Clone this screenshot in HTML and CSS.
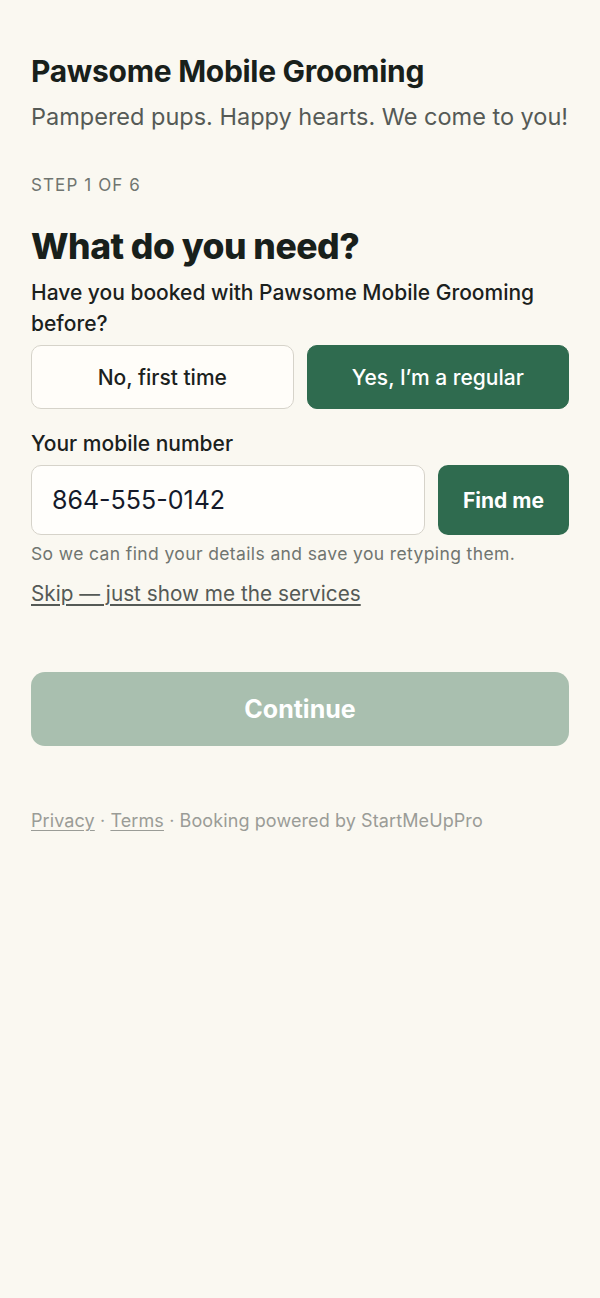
FILE: index.html
```html
<!DOCTYPE html>
<html lang="en">
<head>
    <meta charset="UTF-8">
    <meta name="viewport" content="width=device-width, initial-scale=1.0">
    <title>Pawsome Mobile Grooming - Booking</title>
    <link rel="stylesheet" href="styles.css">
</head>
<body>
    <div class="page">
        <!-- header -->
        <h1 class="brand">Pawsome Mobile Grooming</h1>
        <p class="tagline">Pampered pups. Happy hearts. We come to you!</p>

        <div class="step">Step 1 of 6</div>

        <h2 class="question-title">What do you need?</h2>
        <p class="question">Have you booked with Pawsome Mobile Grooming before?</p>

        <div class="choice-row">
            <button class="choice">No, first time</button>
            <button class="choice selected">Yes, I’m a regular</button>
        </div>

        <!-- phone lookup -->
        <label class="field-label" for="phone">Your mobile number</label>
        <div class="lookup-row">
            <input type="tel" id="phone" class="phone-input" value="864-555-0142">
            <button class="find-button">Find me</button>
        </div>
        <p class="help">So we can find your details and save you retyping them.</p>
        <a href="#" class="skip-link">Skip — just show me the services</a>

        <button class="continue-button" disabled>Continue</button>

        <div class="footer">
            <a href="#">Privacy</a> · <a href="#">Terms</a> · Booking powered by StartMeUpPro
        </div>
    </div>
</body>
</html>
```

FILE: styles.css
```css
body {
    margin: 0;
    background: #faf8f1;
    font-family: Inter, "Noto Sans", Arial, sans-serif;
    color: #1b231e;
}

.page {
    padding: 52px 31px 40px;
}

.brand {
    margin: 0;
    font-size: 30px;
    font-weight: 700;
    line-height: 38px;
    letter-spacing: -0.3px;
    color: #18201b;
}

.tagline {
    margin: 12px 0 0;
    font-size: 23.5px;
    line-height: 30px;
    color: #555a56;
}

.step {
    margin-top: 43px;
    font-size: 17px;
    line-height: 20px;
    text-transform: uppercase;
    letter-spacing: 1.1px;
    color: #707570;
}

.question-title {
    margin: 30px 0 0;
    font-size: 35.5px;
    font-weight: 800;
    line-height: 44px;
    letter-spacing: -0.5px;
    color: #18201b;
}

.question {
    margin: 8px 0 0;
    font-size: 21px;
    font-weight: 500;
    line-height: 31px;
    color: #1b211d;
}

.choice-row {
    display: flex;
    gap: 13px;
    margin-top: 6px;
}

.choice {
    flex: 1;
    height: 64px;
    border: 1.5px solid #d6d3ca;
    border-radius: 10px;
    background: #fffdf9;
    font-family: inherit;
    font-size: 21px;
    font-weight: 500;
    color: #1b211d;
}

.choice.selected {
    background: #2f6b4f;
    border-color: #2f6b4f;
    color: #fff;
}

.field-label {
    display: block;
    margin-top: 20px;
    font-size: 21px;
    font-weight: 500;
    line-height: 30px;
    color: #1b211d;
}

.lookup-row {
    display: flex;
    gap: 13px;
    margin-top: 6px;
}

.phone-input {
    flex: 1;
    min-width: 0;
    height: 70px;
    box-sizing: border-box;
    padding: 0 20px;
    border: 1.5px solid #d6d3ca;
    border-radius: 10px;
    background: #fffefb;
    font-family: inherit;
    font-size: 25px;
    color: #141a2a;
}

.find-button {
    width: 131px;
    height: 70px;
    border: none;
    border-radius: 10px;
    background: #2f6b4f;
    color: #fff;
    font-family: inherit;
    font-size: 21px;
    font-weight: 700;
}

.help {
    margin: 8px 0 0;
    font-size: 17.5px;
    line-height: 22px;
    letter-spacing: 0.38px;
    color: #707570;
}

.skip-link {
    display: inline-block;
    margin-top: 16px;
    font-size: 20.75px;
    line-height: 26px;
    color: #555a56;
    text-decoration: underline;
    text-underline-offset: 3px;
}

.continue-button {
    display: block;
    width: 100%;
    height: 74px;
    margin-top: 65px;
    border: none;
    border-radius: 14px;
    background: #a9bfaf;
    color: #fff;
    font-family: inherit;
    font-size: 25px;
    font-weight: 700;
}

.footer {
    margin-top: 63px;
    font-size: 18px;
    line-height: 24px;
    letter-spacing: 0.1px;
    color: #9a9c97;
}

.footer a {
    color: #9a9c97;
    text-decoration: underline;
    text-underline-offset: 3px;
}
```
